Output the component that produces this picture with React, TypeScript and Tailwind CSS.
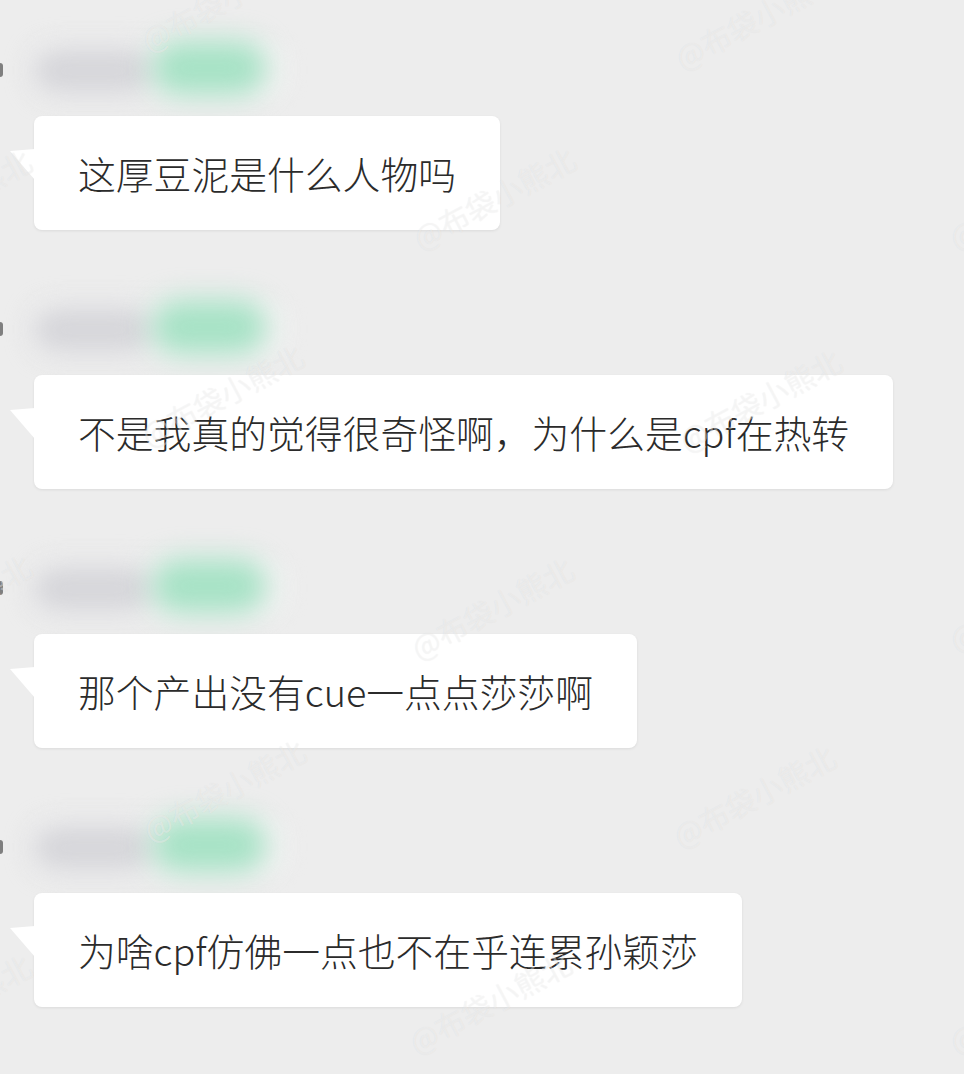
import React from 'react';

const MESSAGES = [
  '这厚豆泥是什么人物吗',
  '不是我真的觉得很奇怪啊，为什么是cpf在热转',
  '那个产出没有cue一点点莎莎啊',
  '为啥cpf仿佛一点也不在乎连累孙颖莎',
];

// watermark centres, written out so tailwind picks them up
const WATERMARKS = [
  'left-[-50px] top-[200px]',
  'left-[-50px] top-[605px]',
  'left-[-50px] top-[1005px]',
  'left-[222px] top-[0px]',
  'left-[222px] top-[395px]',
  'left-[224px] top-[790px]',
  'left-[494px] top-[198px]',
  'left-[492px] top-[608px]',
  'left-[490px] top-[1002px]',
  'left-[756px] top-[18px]',
  'left-[760px] top-[400px]',
  'left-[754px] top-[796px]',
  'left-[1030px] top-[198px]',
  'left-[1030px] top-[600px]',
  'left-[1030px] top-[1002px]',
];

const BlurredName = () => (
  <div className="relative flex h-[80px] items-center pb-[12px]">
    <div className="h-[14px] w-[3px] rounded-r-full bg-[#7f7f7f]" />
    <div className="relative ml-[27px] h-[62px] w-[260px]">
      <div className="absolute inset-0 rounded-[24px] bg-[#f1f1f1] blur-[8px]" />
      <div className="absolute left-[2px] top-[8px] h-[48px] w-[122px] rounded-[24px] bg-[#d6d6da] blur-[13px]" />
      <div className="absolute left-[122px] top-[2px] h-[54px] w-[114px] rounded-[26px] bg-[#a6e2c5] blur-[14px]" />
    </div>
  </div>
);

const Bubble = ({ text }: { text: string }) => (
  <div className="relative ml-[34px] flex h-[114px] w-fit items-center rounded-[8px] bg-white px-[44px] shadow-[0_1px_3px_rgba(0,0,0,0.08)]">
    <svg className="absolute left-[-24px] top-[33px]" width="25" height="32" viewBox="0 0 25 32">
      <polygon points="0,2 25,0 25,31" fill="#ffffff" />
    </svg>
    <span className="whitespace-nowrap text-[37.8px] font-light leading-none text-[#2b2b2b]">{text}</span>
  </div>
);

export default function App() {
  return (
    <div
      className="relative h-[1074px] w-[964px] overflow-hidden bg-[#ededed] pt-[36px]"
      style={{ fontFamily: '"Noto Sans CJK SC", "Noto Sans", sans-serif' }}
    >
      {MESSAGES.map((m) => (
        <div key={m} className="mb-[65px]">
          <BlurredName />
          <Bubble text={m} />
        </div>
      ))}

      <div className="pointer-events-none absolute inset-0">
        {WATERMARKS.map((pos) => (
          <span
            key={pos}
            className={`absolute ${pos} -translate-x-1/2 -translate-y-1/2 -rotate-[28deg] whitespace-nowrap text-[30px] text-white/40 [text-shadow:0_0_1px_rgba(0,0,0,0.07)]`}
          >
            @布袋小熊北
          </span>
        ))}
      </div>
    </div>
  );
}
